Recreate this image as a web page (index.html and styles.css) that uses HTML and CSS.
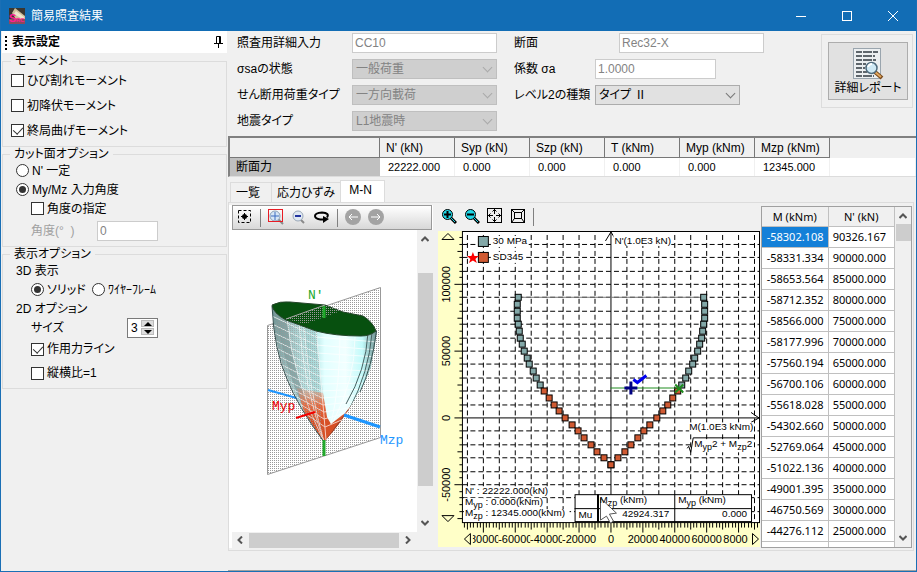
FILE: index.html
```html
<!DOCTYPE html>
<html lang="ja">
<head>
    <meta charset="UTF-8">
    <meta name="viewport" content="width=device-width, initial-scale=1.0">
    <title>簡易照査結果</title>
    <link rel="stylesheet" href="styles.css">
</head>
<body>
<div class="window">
    <header class="titlebar">
        <svg class="app-icon" width="16" height="16" viewBox="0 0 16 16">
            <rect width="16" height="16" fill="#3a3630"/>
            <path d="M6 0L16 8V16H10L3 5Z" fill="#cdbf9c"/>
            <path d="M7 3L15 9V12L5 6Z" fill="#efe6cc"/>
            <path d="M0 11H16V16H0Z" fill="#8d4a5c"/>
            <text x="0" y="14" class="app-icon-s">S</text>
            <text x="7" y="14" class="app-icon-rc">RC</text>
        </svg>
        <h1 class="title">簡易照査結果</h1>
        <div class="win-buttons">
            <button class="win-button" aria-label="最小化"><svg width="10" height="10"><path d="M0 5.5H10"/></svg></button>
            <button class="win-button" aria-label="最大化"><svg width="10" height="10"><rect x="0.5" y="0.5" width="9" height="9"/></svg></button>
            <button class="win-button" aria-label="閉じる"><svg width="10" height="10"><path d="M0 0L10 10M10 0L0 10"/></svg></button>
        </div>
    </header>

    <div class="content">
        <aside class="sidebar">
            <div class="sidebar-head">
                <svg width="3" height="16"><path d="M1 2V16" stroke="#000" stroke-width="2" stroke-dasharray="2 2"/></svg>
                <h2>表示設定</h2>
                <svg class="pin" width="9" height="12" fill="none" stroke="#000"><path d="M2.5 7V0.5H6.5V7M5.5 0V7M0 7.5H9M4.5 8V12"/></svg>
            </div>

            <fieldset class="group">
                <legend>モーメント</legend>
                <label class="row row-tall"><input type="checkbox">ひび割れモーメント</label>
                <label class="row row-tall"><input type="checkbox">初降伏モーメント</label>
                <label class="row row-tall"><input type="checkbox" checked>終局曲げモーメント</label>
            </fieldset>

            <fieldset class="group group-cut">
                <legend>カット面オプション</legend>
                <label class="row"><input type="radio" name="cut">N' 一定</label>
                <label class="row"><input type="radio" name="cut" checked>My/Mz 入力角度</label>
                <label class="row indent"><input type="checkbox">角度の指定</label>
                <div class="row row-tall indent">
                    <label class="off" for="angle">角度(°&nbsp; )</label>
                    <input class="field angle" id="angle" type="text" value="0" disabled>
                </div>
            </fieldset>

            <fieldset class="group group-view">
                <legend>表示オプション</legend>
                <div class="row">3D 表示</div>
                <div class="row indent">
                    <label class="choice"><input type="radio" name="mode" checked>ソリッド</label>
                    <label class="choice"><input type="radio" name="mode">ﾜｲﾔｰﾌﾚｰﾑ</label>
                </div>
                <div class="row">2D オプション</div>
                <div class="row indent">
                    <label for="size">サイズ</label>
                    <span class="spin">
                        <input id="size" type="text" value="3">
                        <span class="spin-buttons">
                            <button aria-label="増やす"><svg width="8" height="4"><path d="M0 4L4 0L8 4Z"/></svg></button>
                            <button aria-label="減らす"><svg width="8" height="4"><path d="M0 0L4 4L8 0Z"/></svg></button>
                        </span>
                    </span>
                </div>
                <label class="row row-tall indent"><input type="checkbox" checked>作用力ライン</label>
                <label class="row row-tall indent"><input type="checkbox">縦横比=1</label>
            </fieldset>
        </aside>

        <main class="main">
            <section class="form">
                <div class="form-left">
                    <label for="detail">照査用詳細入力</label>
                    <input class="field" id="detail" type="text" value="CC10" disabled>
                    <label for="sigma">σsaの状態</label>
                    <span class="select"><select id="sigma" disabled><option>一般荷重</option></select></span>
                    <label for="shear">せん断用荷重タイプ</label>
                    <span class="select"><select id="shear" disabled><option>一方向載荷</option></select></span>
                    <label for="quake">地震タイプ</label>
                    <span class="select"><select id="quake" disabled><option>L1地震時</option></select></span>
                </div>
                <div class="form-right">
                    <div class="form-row">
                        <label class="wide" for="section">断面</label>
                        <input class="field" id="section" type="text" value="Rec32-X" disabled>
                    </div>
                    <div class="form-row">
                        <label for="coef">係数 σa</label>
                        <input class="field short" id="coef" type="text" value="1.0000" disabled>
                    </div>
                    <div class="form-row">
                        <label for="level2">レベル2の種類</label>
                        <span class="select"><select id="level2"><option>タイプ Ⅱ</option></select></span>
                    </div>
                </div>
                <div class="report-box">
                    <button class="report">
                        <svg width="32" height="32" viewBox="0 0 32 32">
                            <rect x="1.5" y="0.5" width="27" height="30" fill="#eceff1" stroke="#9aa5ae"/>
                            <g stroke="#5f666c" stroke-width="2" stroke-dasharray="6 1 9 1">
                                <path d="M4 4H26M4 8H23"/><path d="M4 12H24M4 16H14"/><path d="M4 20H13M4 24H15M4 28H22"/>
                            </g>
                            <path d="M23 24L30 30" stroke="#7a4a1c" stroke-width="4"/>
                            <path d="M23 24L29 29" stroke="#e2a860" stroke-width="2"/>
                            <circle cx="19.500" cy="20" r="5.500" fill="#cfe9f5" stroke="#4f6b7d" stroke-width="1.500"/>
                            <path d="M16 19Q17 16 20 16" stroke="#fff" stroke-width="2" fill="none"/>
                        </svg>
                        <span>詳細レポート</span>
                    </button>
                </div>
            </section>

            <table class="forces">
                <thead>
                    <tr><th class="first"></th><th>N' (kN)</th><th>Syp (kN)</th><th>Szp (kN)</th><th>T (kNm)</th><th>Myp (kNm)</th><th>Mzp (kNm)</th><td class="rest"></td></tr>
                </thead>
                <tbody>
                    <tr><th>断面力</th><td>22222.000</td><td>0.000</td><td>0.000</td><td>0.000</td><td>0.000</td><td>12345.000</td><td></td></tr>
                </tbody>
            </table>

            <nav class="tabs">
                <button class="tab">一覧</button>
                <button class="tab">応力ひずみ</button>
                <button class="tab active">M-N</button>
            </nav>

            <section class="panel">
                <div class="viewer">
                    <div class="toolbar viewer-toolbar">
                        <button aria-label="全体表示"><svg width="16" height="16"><rect x="1.500" y="1.500" width="12" height="12" fill="none" stroke="#000" stroke-dasharray="3 2"/><path d="M7.500 4V11M4 7.500H11" stroke="#000"/><circle cx="7.500" cy="7.500" r="2.500"/></svg></button>
                        <span class="sep"></span>
                        <button aria-label="範囲拡大"><svg width="16" height="16"><path d="M10 10L15 15" stroke="#8a8a8a" stroke-width="2"/><circle cx="7" cy="7" r="5" fill="#d6e6f5" stroke="#8aa0b8"/><path d="M3 7H11M7 3V11" stroke="#3c6cc0"/><rect x="0.500" y="0.500" width="14" height="12" fill="none" stroke="#e81c24"/></svg></button>
                        <button aria-label="縮小"><svg width="16" height="16"><path d="M9 10L13 14" stroke="#8a8a8a" stroke-width="2"/><circle cx="7" cy="7" r="5" fill="#dfe8f2" stroke="#9aa8b8"/><path d="M4 7H10" stroke="#2334a0" stroke-width="2"/></svg></button>
                        <button aria-label="回転"><svg width="16" height="16"><path d="M13 8.500Q16 4 8 3.500Q1 4 1 7Q1 9.500 6 10.500" fill="none" stroke="#000" stroke-width="2"/><path d="M6 10.500H10" stroke="#000" stroke-width="2"/><path d="M9 7L15 10L9 14Z"/></svg></button>
                        <span class="sep"></span>
                        <button aria-label="戻る"><svg width="16" height="16"><circle cx="8" cy="8" r="8" fill="#a3a3a3"/><path d="M13 8H4M7 5L4 8L7 11" fill="none" stroke="#fff"/></svg></button>
                        <button aria-label="進む"><svg width="16" height="16"><circle cx="8" cy="8" r="8" fill="#a3a3a3"/><path d="M3 8H12M9 5L12 8L9 11" fill="none" stroke="#fff"/></svg></button>
                    </div>
                    <div class="viewer-body">
                        <svg class="solid" viewBox="229 230 188 302" role="img" aria-label="3D 表示">
                            <defs>
                                <pattern id="dots" width="2" height="2" patternUnits="userSpaceOnUse"><rect width="1" height="1" fill="#999"/></pattern>
                                <linearGradient id="skin" x1="272" x2="377" y1="0" y2="0" gradientUnits="userSpaceOnUse">
                                    <stop offset="0" stop-color="#6f9494"/><stop offset="0.120" stop-color="#94b6b6"/>
                                    <stop offset="0.280" stop-color="#b4dcdc"/><stop offset="0.420" stop-color="#bfeaea"/>
                                    <stop offset="0.500" stop-color="#e2ffff"/><stop offset="0.700" stop-color="#f2ffff"/>
                                    <stop offset="0.860" stop-color="#c2fafa"/><stop offset="1" stop-color="#6f9090"/>
                                </linearGradient>
                                <linearGradient id="heat" x1="0" x2="0" y1="388" y2="422" gradientUnits="userSpaceOnUse">
                                    <stop offset="0" stop-color="#ec8058" stop-opacity="0.300"/><stop offset="0.500" stop-color="#e56c42"/><stop offset="1" stop-color="#d85026"/>
                                </linearGradient>
                                <clipPath id="body"><path d="M272 306Q275 350 288 379Q298 405 324 442Q342 422 353 402Q369 375 371 367L377 331L316 322Z"/></clipPath>
                            </defs>
                            <path d="M267.500 325.500L380.500 287.500V437.500L267.500 474.500Z" fill="url(#dots)" stroke="#999"/>
                            <path d="M268 390L300 399" stroke="#1e96ff" stroke-width="2"/>
                            <g clip-path="url(#body)">
                                <rect x="270" y="300" width="110" height="145" fill="url(#skin)"/>
                                <path d="M287 319Q290 370 324 442L306 413Q288 380 273 306Z" fill="#7c9a9a" opacity="0.700"/>
                                <path d="M316 326Q320 380 328 425L324 442Q308 390 304 324Z" fill="#99cccc" opacity="0.500"/>
                                <path d="M297 388L323 393L327 417L331 424L345 413L356 400L340 450H315Z" fill="url(#heat)"/>
                                <path d="M324 442L344 415L358 396L352 412L326 446Z" fill="#96412a"/>
                                <g fill="none" stroke="#fff" opacity="0.700">
                                    <path d="M272 316L316 337L377 342M272 324L316 345L377 350M272 332L317 353L377 357M274 340L318 361L375 364M276 348L318 369L375 371M278 356L319 376L373 377M280 364L320 384L371 383M283 372L321 391L368 389M286 380L322 398L364 395M290 388L323 405L360 401M295 396L324 412L355 407M300 404L324 419L350 412M306 414L325 427L344 419"/>
                                    <path d="M287 318Q293 380 324 442M299 324Q305 390 324 442M304 326Q309 390 324 442M316 330Q322 390 326 440M340 335Q340 385 331 424M355 337Q355 380 333 422"/>
                                </g>
                                <path d="M368 333Q366 370 346 404M372 333Q369 372 349 410" fill="none" stroke="#476060"/>
                                <path d="M270 325L316 308L323 440L270 442Z" fill="url(#dots)" opacity="0.600"/>
                            </g>
                            <path d="M272 306Q274 350 287 379Q298 407 324 442M376.500 331Q372 367 360 392" fill="none" stroke="#355050"/>
                            <path d="M272 305Q280 301 290 302L325 305L343 312L363 316Q373 322 376 331Q370 336 361 336Q335 336 316 331L286 320Q273 313 272 305Z" fill="#07500f" stroke="#24442a"/>
                            <path d="M286 319L325 305L341 311L305 324Z" fill="url(#dots)"/>
                            <path d="M286 319L325 305" stroke="#aaa"/>
                            <path d="M324 306V318M324 440V456" stroke="#22a82c" stroke-width="3"/>
                            <path d="M344 415L380 427" stroke="#1e96ff" stroke-width="3"/>
                            <path d="M296 418L315 412" stroke="#f00000" stroke-width="2"/>
                            <text class="axis-n" x="308" y="299">N'</text>
                            <text class="axis-y" x="272" y="410">Myp</text>
                            <text class="axis-z" x="380" y="444">Mzp</text>
                        </svg>
                        <div class="vscroll">
                            <svg width="8" height="6"><path d="M0.500 5L4 1.500L7.500 5"/></svg>
                            <div class="thumb"></div>
                            <svg width="8" height="6"><path d="M0.500 1L4 4.500L7.500 1"/></svg>
                        </div>
                    </div>
                    <div class="hscroll">
                        <svg width="6" height="8"><path d="M5 0.500L1.500 4L5 7.500"/></svg>
                        <div class="thumb"></div>
                        <svg width="6" height="8"><path d="M1 0.500L4.500 4L1 7.500"/></svg>
                    </div>
                </div>

                <div class="chart-pane">
                    <div class="toolbar">
                        <button aria-label="拡大"><svg width="16" height="16"><path d="M9 9L15 15" stroke="#000" stroke-width="3"/><path d="M10 10L14 14" stroke="#20d8e8"/><circle cx="6.500" cy="6.500" r="5" fill="#20d8e8" stroke="#000"/><path d="M3 6.500H10M6.500 3V10" stroke="#000" stroke-width="2"/></svg></button>
                        <button aria-label="縮小"><svg width="16" height="16"><path d="M9 9L15 15" stroke="#000" stroke-width="3"/><path d="M10 10L14 14" stroke="#20d8e8"/><circle cx="6.500" cy="6.500" r="5" fill="#20d8e8" stroke="#000"/><path d="M3 6.500H10" stroke="#000" stroke-width="2"/></svg></button>
                        <button aria-label="全体"><svg width="16" height="16" fill="none" stroke="#000"><rect x="0.500" y="0.500" width="14" height="14"/><path d="M7.500 1V6M7.500 9V14M1 7.500H6M9 7.500H14M5.500 3.500L7.500 1.500L9.500 3.500M5.500 11.500L7.500 13.500L9.500 11.500M3.500 5.500L1.500 7.500L3.500 9.500M11.500 5.500L13.500 7.500L11.500 9.500"/></svg></button>
                        <button aria-label="等倍"><svg width="16" height="16" fill="none" stroke="#000"><rect x="1.500" y="1.500" width="13" height="13"/><rect x="4.500" y="4.500" width="7" height="6"/><path d="M2 2L4 4M14 2L12 4M2 14L4 11M14 14L12 11"/></svg></button>
                        <span class="sep"></span>
                    </div>
                    <svg class="chart" id="chart" viewBox="0 0 323 317" role="img" aria-label="M-N 図"></svg>
                </div>

                <div class="points">
                    <div class="points-clip">
                        <table>
                            <thead><tr><th>M (kNm)</th><th>N' (kN)</th></tr></thead>
                            <tbody id="points"></tbody>
                        </table>
                    </div>
                    <div class="vscroll">
                        <svg width="8" height="6"><path d="M0.500 5L4 1.500L7.500 5"/></svg>
                        <div class="thumb"></div>
                        <svg width="8" height="6"><path d="M0.500 1L4 4.500L7.500 1"/></svg>
                    </div>
                </div>
            </section>
            <footer class="status"></footer>
        </main>
    </div>
</div>
<script src="chart.js"></script>
</body>
</html>
```

FILE: styles.css
```css
* {
    box-sizing: border-box;
}
body {
    margin: 0;
    font-family: "Liberation Sans", "Noto Sans CJK JP", sans-serif;
    font-size: 12px;
    line-height: 16px;
    font-feature-settings: "palt";
    color: #000;
    background: #f0f0f0;
}
button, input, select {
    font: inherit;
    font-feature-settings: inherit;
    color: inherit;
    margin: 0;
    padding: 0;
}
h1, h2 {
    margin: 0;
    font-size: 12px;
}
svg {
    display: block;
    flex: none;
}
.window {
    display: flex;
    flex-direction: column;
    height: 100vh;
    border: 1px solid #1a6fb5;
    border-top: none;
}

/* title bar */
.titlebar {
    display: flex;
    align-items: center;
    height: 31px;
    flex: none;
    padding-left: 8px;
    background: #126db5;
    color: #fff;
}
.app-icon {
    overflow: visible;
}
.app-icon-s {
    font: bold 11px "Liberation Sans", sans-serif;
    fill: #ff1e96;
}
.app-icon-rc {
    font: bold 6px "Liberation Sans", sans-serif;
    fill: #ff1e96;
}
.title {
    margin-left: 6px;
    font-weight: normal;
}
.win-buttons {
    display: flex;
    margin-left: auto;
}
.win-button {
    display: flex;
    align-items: center;
    justify-content: center;
    width: 46px;
    height: 30px;
    border: none;
    background: none;
}
.win-button svg {
    fill: none;
    stroke: #fff;
}

.content {
    display: flex;
    flex: 1;
    min-height: 0;
}

/* left settings */
.sidebar {
    width: 227px;
    flex: none;
    padding: 0 1px;
}
.sidebar-head {
    display: flex;
    align-items: center;
    height: 22px;
    margin-bottom: 1px;
    padding: 0 4px 0 3px;
    background: #fff;
}
.sidebar-head h2 {
    margin-left: 4px;
}
.pin {
    margin-left: auto;
}
.group {
    margin: 0;
    padding: 0 8px 3px;
    border: 1px solid #dcdcdc;
    min-width: 0;
}
.group legend {
    padding: 0 4px;
    line-height: 14px;
}
.group-cut, .group-view {
    padding-left: 13px;
}
.group-cut legend, .group-view legend {
    margin-left: -6px;
}
.row {
    display: flex;
    align-items: center;
    height: 19px;
    white-space: nowrap;
}
.row-tall {
    height: 25px;
}
.group-view .row-tall {
    height: 24px;
}
.indent {
    padding-left: 15px;
}
.off {
    color: #a0a0a0;
    width: 66px;
}
.choice {
    display: flex;
    align-items: center;
    width: 61px;
}
input[type="checkbox"], input[type="radio"] {
    appearance: none;
    position: relative;
    flex: none;
    width: 13px;
    height: 13px;
    margin-right: 3px;
    border: 1px solid #333;
    background: #fff;
}
input[type="radio"] {
    border-radius: 50%;
}
input[type="checkbox"]:checked::after {
    content: "";
    position: absolute;
    left: 3px;
    top: 0;
    width: 5px;
    height: 8px;
    border: solid #333;
    border-width: 0 1px 1px 0;
    transform: rotate(42deg);
}
input[type="radio"]:checked::after {
    content: "";
    position: absolute;
    inset: 2px;
    border-radius: 50%;
    background: #333;
}
.field {
    width: 145px;
    height: 20px;
    padding: 0 2px;
    border: 1px solid #ccc;
    background: #fff;
}
.field:disabled {
    color: #838383;
}
.angle {
    width: 61px;
}
.spin {
    display: flex;
    align-items: center;
    width: 31px;
    height: 20px;
    margin-left: auto;
    margin-right: 60px;
    border: 1px solid #7a7a7a;
    background: #fff;
}
.spin input {
    width: 13px;
    height: 16px;
    padding-left: 3px;
    border: none;
    background: none;
}
.spin-buttons {
    display: flex;
    flex-direction: column;
    gap: 1px;
}
.spin-buttons button {
    display: flex;
    align-items: center;
    justify-content: center;
    width: 13px;
    height: 7px;
    border: 1px solid #bbb;
    background: #ddd;
}

/* inputs on top */
.main {
    flex: 1;
    min-width: 0;
    display: flex;
    flex-direction: column;
}
.form {
    display: flex;
    height: 105px;
    flex: none;
    padding: 2px 3px 0 9px;
    white-space: nowrap;
}
.form-left {
    display: grid;
    grid-template-columns: 115px 145px;
    grid-auto-rows: 20px;
    row-gap: 6px;
    align-items: center;
}
.form-right {
    display: flex;
    flex-direction: column;
    gap: 6px;
    margin-left: 17px;
}
.form-row {
    display: flex;
    align-items: center;
    height: 20px;
}
.form-row label {
    width: 81px;
}
.form-row .wide {
    width: 105px;
}
.short {
    width: 121px;
}
.select {
    position: relative;
    width: 145px;
    height: 20px;
}
.select select {
    appearance: none;
    width: 100%;
    height: 20px;
    padding: 0 3px;
    border: 1px solid #acacac;
    border-radius: 0;
    background: #e1e1e1;
}
.select select:disabled {
    border-color: #bfbfbf;
    background: #cfcfcf;
    color: #838383;
    opacity: 1;
}
.select::after {
    content: "";
    position: absolute;
    right: 6px;
    top: 5px;
    width: 6px;
    height: 6px;
    border: solid #777;
    border-width: 0 1px 1px 0;
    transform: rotate(45deg);
    pointer-events: none;
}
.select:has(:disabled)::after {
    border-color: #aaa;
}
.report-box {
    width: 92px;
    height: 74px;
    margin: 1px 0 0 auto;
    padding: 7px 4px 0 6px;
    border: 1px solid #dcdcdc;
}
.report {
    display: flex;
    flex-direction: column;
    align-items: center;
    width: 100%;
    height: 58px;
    padding-top: 5px;
    border: 1px solid #adadad;
    background: #e1e1e1;
}

/* section forces */
.forces {
    width: 100%;
    flex: none;
    table-layout: fixed;
    border-collapse: separate;
    border-spacing: 0;
    border-top: 2px solid #808080;
    border-left: 2px solid #808080;
    border-bottom: 1px solid #dcdcdc;
    text-align: left;
}
.forces th, .forces td {
    width: 75px;
    height: 20px;
    padding: 0 6px;
    font-weight: normal;
    white-space: nowrap;
}
.forces thead th {
    border-right: 1px solid #777;
    border-bottom: 1px solid #777;
}
.forces thead .first {
    width: 150px;
}
.forces .rest {
    width: auto;
}
.forces tbody th {
    height: 18px;
    background: #c0c0c0;
}
.forces tbody td {
    height: 18px;
    padding: 0 8px;
    border-right: 1px solid #f0f0f0;
    background: #fff;
    font-size: 11px;
}

/* tabs */
.tabs {
    display: flex;
    align-items: flex-end;
    height: 25px;
    flex: none;
    padding-left: 2px;
}
.tab {
    min-width: 41px;
    height: 20px;
    padding: 0 5px;
    border: 1px solid #dcdcdc;
    border-bottom: none;
    border-right: none;
    background: #f0f0f0;
    text-align: left;
}
.tab.active {
    min-width: 45px;
    height: 22px;
    border-right: 1px solid #dcdcdc;
    background: #fff;
    padding: 0 8px 4px;
}
.panel {
    display: flex;
    flex: 1;
    min-height: 0;
    margin-right: 2px;
    border: 1px solid #dcdcdc;
    padding: 2px 1px 2px 0;
}
.toolbar {
    display: flex;
    gap: 7px;
    height: 26px;
    padding: 3px;
}
.toolbar button {
    width: 16px;
    height: 16px;
    border: none;
    background: none;
}
.sep {
    width: 1px;
    height: 18px;
    background: #808080;
}

/* 3D view */
.viewer {
    display: flex;
    flex-direction: column;
    width: 204px;
    flex: none;
    background: #fff;
}
.viewer-toolbar {
    height: 25px;
    margin: 0 1px 0 3px;
    padding: 3px 4px;
    border: 1px solid #999;
    background: linear-gradient(#fff, #d8d8d8);
}
.viewer-body {
    display: flex;
    flex: 1;
    min-height: 0;
}
.solid {
    flex: 1;
    min-width: 0;
}
.solid text {
    font: 13px "Liberation Mono", monospace;
}
.axis-n {
    fill: #22a82c;
}
.axis-y {
    fill: #f00000;
}
.axis-z {
    fill: #1e96ff;
}
.vscroll, .hscroll {
    display: flex;
    align-items: center;
    flex: none;
    background: #f0f0f0;
}
.vscroll {
    flex-direction: column;
    width: 16px;
    padding: 6px 0;
}
.hscroll {
    height: 16px;
    margin-left: 3px;
    padding: 0 22px 0 5px;
}
.vscroll svg, .hscroll svg {
    fill: none;
    stroke: #555;
    stroke-width: 2;
}
.vscroll svg:last-child {
    margin-top: auto;
}
.thumb {
    background: #cdcdcd;
}
.viewer .vscroll .thumb {
    width: 15px;
    height: 213px;
    margin-top: 31px;
}
.hscroll .thumb {
    flex: 1;
    height: 15px;
    margin: 0 6px;
}

/* M-N chart */
.chart-pane {
    flex: 1;
    min-width: 0;
    margin: 0 1px 0 5px;
}
.chart {
    width: 100%;
    height: auto;
}
.chart text {
    font: 10px "Liberation Sans", sans-serif;
}
.chart .scale {
    font-size: 11px;
    text-anchor: middle;
}
.chart .sub {
    font-size: 9px;
}

/* point list */
.points {
    display: flex;
    width: 151px;
    flex: none;
    margin-top: 1px;
    border: 1px solid #a0a0a0;
    background: #fff;
}
.points-clip {
    flex: 1;
    overflow: hidden;
}
.points table {
    width: 100%;
    border-spacing: 0;
    table-layout: fixed;
    font-family: "Noto Sans", sans-serif;
    font-size: 11px;
}
.points th, .points td {
    height: 21px;
    padding: 0 4px 0 0;
    border-right: 1px solid #c0c0c0;
    border-bottom: 1px solid #c0c0c0;
    font-weight: normal;
    text-align: right;
}
.points th {
    height: 20px;
    background: #f0f0f0;
    padding: 0;
    text-align: center;
}
.points td:last-child {
    padding-right: 8px;
}
.points .selected {
    background: #1480d8;
    color: #fff;
}
.points .thumb {
    width: 15px;
    height: 17px;
    margin-top: 5px;
}
.status {
    height: 20px;
    flex: none;
    border-bottom: 1px solid #a0a0a0;
}
```

FILE: chart.js
```js
// M, N' on the compression side of the curve
const points = [
    [-58302.108, 90326.167],
    [-58331.334, 90000],
    [-58653.564, 85000],
    [-58712.352, 80000],
    [-58566.000, 75000],
    [-58177.996, 70000],
    [-57560.194, 65000],
    [-56700.106, 60000],
    [-55618.028, 55000],
    [-54302.660, 50000],
    [-52769.064, 45000],
    [-51022.136, 40000],
    [-49001.395, 35000],
    [-46750.569, 30000],
    [-44276.112, 25000],
    [-41700, 20000],
    [-38600, 15000],
    [-35400, 10000],
    [-32300, 5000],
    [-28500, 0],
    [-24100, -5000],
    [-20400, -10000],
    [-16600, -15000],
    [-12200, -20000],
    [-8500, -25000],
    [-4400, -30000],
    [0, -35000]
];

const plot = { left: 24.5, right: 322.5, top: 0.5, bottom: 292.5 };
const svg = document.getElementById('chart');

function px(m) {
    return Math.round(173 + m * 0.0016) + 0.5;
}

function py(n) {
    return Math.round(187 - n * 0.00134) + 0.5;
}

function add(name, attrs, text) {
    const el = document.createElementNS('http://www.w3.org/2000/svg', name);
    for (const key in attrs) el.setAttribute(key, attrs[key]);
    if (text !== undefined) el.textContent = text;
    svg.appendChild(el);
    return el;
}

function line(d, stroke = '#000', width = 1, dash = 'none') {
    add('path', { d: d, stroke: stroke, 'stroke-width': width, 'stroke-dasharray': dash, fill: 'none' });
}

function box(x, y, w, h, fill, stroke = 'none') {
    add('rect', { x: x, y: y, width: w, height: h, fill: fill, stroke: stroke });
}

// every second part is a lowered suffix
function subText(x, y, parts) {
    const t = add('text', { x: x, y: y });
    parts.forEach((str, i) => {
        const span = document.createElementNS('http://www.w3.org/2000/svg', 'tspan');
        if (i > 0) span.setAttribute('dy', i % 2 ? 3 : -3);
        if (i % 2) span.setAttribute('class', 'sub');
        span.textContent = str;
        t.appendChild(span);
    });
}

function drawGrid() {
    box(0, 0, 323, 317, '#ffffc8');
    box(plot.left, plot.top, 298, 292, '#fff', '#000');
    for (let m = -90000; m <= 90000; m += 10000) {
        if (m !== 0) line(`M${px(m)} 4V${plot.bottom}`, '#000', 1, '5 3');
    }
    for (let n = -70000; n <= 130000; n += 10000) {
        if (n !== 0) line(`M${plot.left} ${py(n)}H${plot.right}`, '#000', 1, '5 3');
    }
    line(`M${px(0)} 1V${plot.bottom}M${plot.left} ${py(0)}H${plot.right}`);
    line('M168 10L173.500 1L179 10M314 182L322 187.500L314 192');
}

function drawScales() {
    for (let n = -75000; n <= 135000; n += 5000) {
        const len = n % 50000 === 0 ? 8 : n % 25000 === 0 ? 5 : 3;
        line(`M${plot.left} ${py(n)}h${-len}`);
    }
    for (let m = -92000; m <= 92000; m += 2000) {
        const len = m % 20000 === 0 ? 10 : m % 10000 === 0 ? 7 : 5;
        line(`M${px(m)} ${plot.bottom}v${len}`);
    }
    for (const n of [-50000, 0, 50000, 100000]) {
        add('text', { class: 'scale', transform: `translate(12 ${py(n)}) rotate(-90)` }, n);
    }
    for (let m = -80000; m <= 80000; m += 20000) {
        if (m < 0) box(px(m) - 17, 303, 34, 13, '#ffffc8');
        add('text', { class: 'scale', x: px(m), y: 313 }, m);
    }
    box(25, 303, 10, 13, '#ffffc8');
    box(311, 303, 12, 13, '#ffffc8');
    line('M4 8.500H16L10 2.500ZM4 285.500H16L10 291.500ZM26.500 309L32.500 303.500V314.500ZM315.500 303.500V314.500L321.500 309Z');
}

function drawCurve() {
    line(`M${px(-58302)} ${py(90326)}H${px(58302)}`, '#777');
    for (const side of [1, -1]) {
        for (const [m, n] of points) {
            if (n === 90000) continue;
            box(px(m * side) - 3, py(n) - 3, 6, 6, n > 20000 ? '#83a8a8' : '#d05a32', '#000');
        }
    }
    line('M173 157.500H242', '#1e8c1e');
    line('M238 154L246 162M246 154L238 162', '#1e8c1e', 2);
    line('M187 157.500H200M193.500 151V164', '#000082', 3);
    line('M196 149L200 152L209 145', '#0000f0', 3);
}

function drawLabels() {
    box(53, 5, 38, 11, '#fff');
    box(53, 21, 35, 11, '#fff');
    box(40.5, 5.5, 10, 10, '#83a8a8', '#000');
    box(40.5, 21.5, 10, 10, '#d05a32', '#000');
    add('path', { d: 'M35 21L36.500 25H41L37.500 28L39 32L35 29.500L31 32L32.500 28L29 25H33.500Z', fill: '#f00' });
    add('text', { x: 55, y: 13 }, '30 MPa');
    add('text', { x: 55, y: 29 }, 'SD345');

    box(176, 4, 58, 11, '#fff');
    add('text', { x: 177, y: 13 }, "N'(1.0E3 kN)");
    box(252, 192, 65, 11, '#fff');
    add('text', { x: 252, y: 200 }, 'M(1.0E3 kNm)');
    box(256, 209, 61, 13, '#fff');
    line('M250 218L251.500 216L253.500 222L256 207.500H317');
    subText(257, 217, ['M', 'yp', '2 + M', 'zp', '2']);

    box(26, 256, 88, 11, '#fff');
    box(26, 268, 82, 11, '#fff');
    box(26, 279, 106, 12, '#fff');
    add('text', { x: 27, y: 264 }, "N' : 22222.000(kN)");
    subText(27, 275, ['M', 'yp', ' : 0.000(kNm)']);
    subText(27, 286, ['M', 'zp', ' : 12345.000(kNm)']);
}

function drawResult() {
    box(137.5, 264.5, 177, 27, '#fff', '#000');
    line('M137 278.500H315M237.500 264V292');
    line('M160.500 264V292', '#000', 2);
    // pointer
    add('path', { d: 'M163 268L179 283L172 284L176 291L173 293L169 286L163 290Z', fill: '#fff', stroke: '#555' });
    add('text', { x: 141, y: 288 }, 'Mu');
    subText(162, 273, ['M', 'zp', ' (kNm)']);
    subText(241, 273, ['M', 'yp', ' (kNm)']);
    add('text', { x: 232, y: 287, 'text-anchor': 'end' }, '42924.317');
    add('text', { x: 310, y: 287, 'text-anchor': 'end' }, '0.000');
}

function fillTable() {
    const body = document.getElementById('points');
    points.slice(0, 15).forEach(([m, n], i) => {
        const row = body.insertRow();
        row.insertCell().innerText = m.toFixed(3);
        row.insertCell().innerText = n.toFixed(3);
        if (i === 0) row.cells[0].className = 'selected';
    });
    // blank row that runs under the lower edge
    const last = body.insertRow();
    last.insertCell();
    last.insertCell();
}

drawGrid();
drawScales();
drawCurve();
drawLabels();
drawResult();
fillTable();
```
